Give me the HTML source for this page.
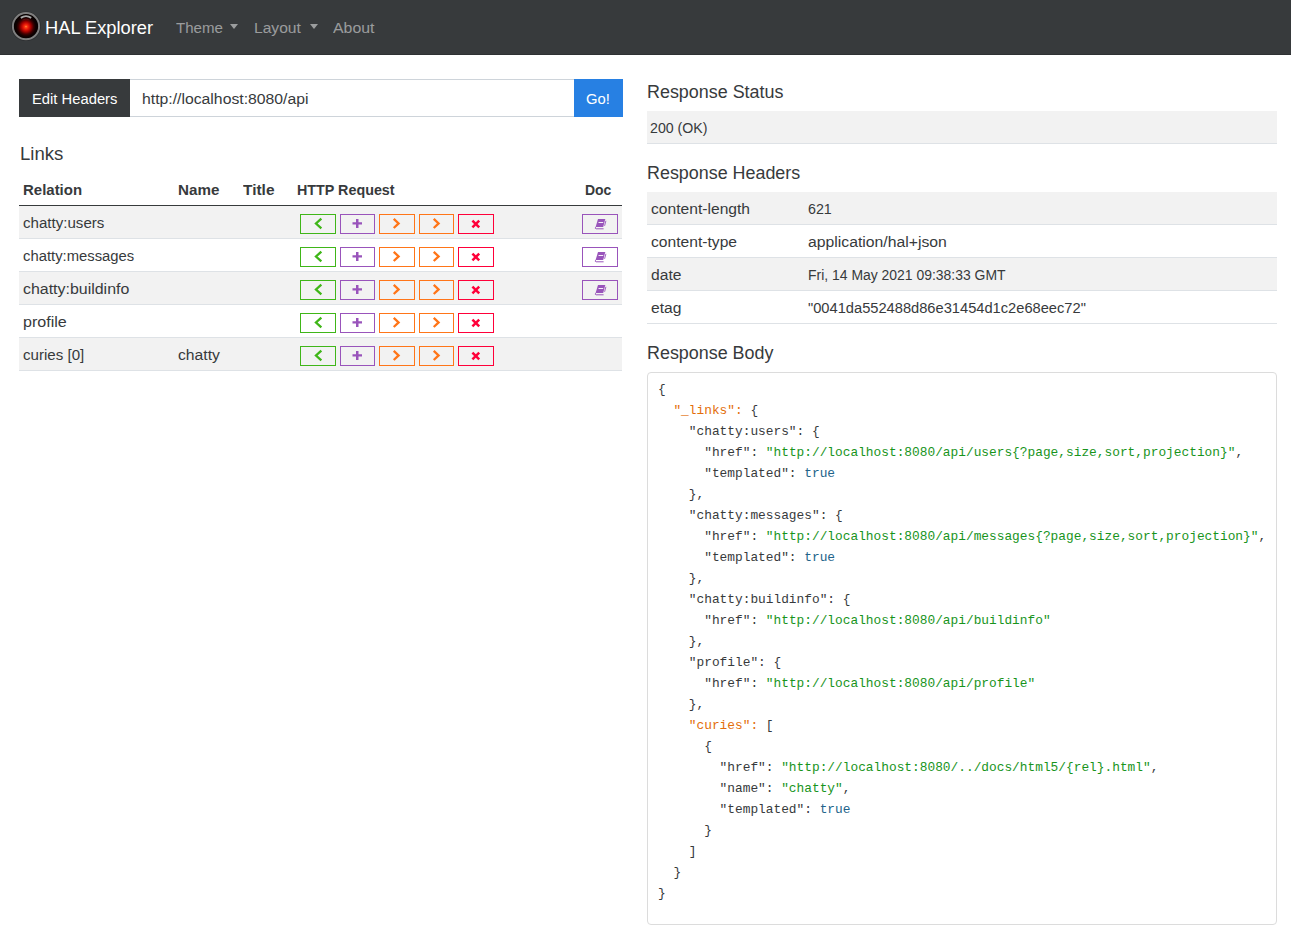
<!DOCTYPE html>
<html>
<head>
<meta charset="utf-8">
<style>
*{box-sizing:border-box;margin:0;padding:0}
html,body{width:1291px;height:942px;overflow:hidden;background:#fff}
body{font-family:"Liberation Sans",sans-serif;color:#373a3c;position:relative}
.t{position:absolute;white-space:pre;line-height:1;transform-origin:0 0;z-index:5}
.bm{display:inline-block;width:0;height:0;vertical-align:baseline}
#nav{position:absolute;left:0;top:0;width:1291px;height:55px;background:#373a3c;border-bottom:1px solid #2e3133}
#logo{position:absolute;left:10px;top:10px}
.caret{position:absolute;width:0;height:0;border-left:4.5px solid transparent;border-right:4.5px solid transparent;border-top:5px solid rgba(255,255,255,.5)}
.bx{position:absolute}
.row{position:absolute;left:0;height:33px;border-bottom:1px solid #dee2e6}
.row.s{background:#f2f2f2}
.ob{position:absolute;top:8px;height:20px;border:1px solid}
.g{border-color:#3fb618;color:#3fb618}
.p{border-color:#9954bb;color:#9954bb}
.o{border-color:#ff7518;color:#ff7518}
.r{border-color:#ff0039;color:#ff0039}
.ob svg{position:absolute;left:50%;top:50%;transform:translate(-50%,-50%)}
#pre{position:absolute;left:647px;top:372px;width:630px;height:553px;border:1px solid #dcdcdc;border-radius:4px}
#code{position:absolute;left:10px;top:6px;font-family:"Liberation Mono",monospace;font-size:12.83px;line-height:21px;white-space:pre;color:#373a3c}
.k{color:#e36e0a}
.st{color:#18941c}
.tr{color:#22638a}
</style>
</head>
<body>
<div id="nav">
  <svg id="logo" width="32" height="32" viewBox="0 0 32 32">
    <defs>
      <radialGradient id="eye" cx="16" cy="16.8" r="11.6" gradientUnits="userSpaceOnUse">
        <stop offset="0" stop-color="#ffc868"/>
        <stop offset="0.07" stop-color="#ff4a18"/>
        <stop offset="0.23" stop-color="#e81808"/>
        <stop offset="0.44" stop-color="#a00000"/>
        <stop offset="0.64" stop-color="#400000"/>
        <stop offset="0.82" stop-color="#120000"/>
        <stop offset="1" stop-color="#060000"/>
      </radialGradient>
    </defs>
    <circle cx="16" cy="16.2" r="14.8" fill="#262829" opacity="0.7"/>
    <circle cx="16" cy="16.2" r="13.1" fill="#0a0000" stroke="#7f7f7f" stroke-width="2"/>
    <circle cx="16" cy="16.2" r="11.6" fill="url(#eye)"/>
    <path d="M10.8 7.9 Q16 4.4 21.2 7.9" stroke="#a8a8a8" stroke-width="1.9" fill="none"/><path d="M12.5 10 Q16 8.2 19.5 10" stroke="#6a2020" stroke-width="1" fill="none" opacity="0.6"/>
  </svg>
  <span class="caret" style="left:230px;top:23.6px"></span>
  <span class="caret" style="left:309.5px;top:23.6px"></span>
</div>

<div class="bx" style="left:19px;top:79px;width:111px;height:38px;background:#373a3c"></div>
<div class="bx" style="left:130px;top:79px;width:444px;height:38px;border-top:1px solid #ced4da;border-bottom:1px solid #ced4da"></div>
<div class="bx" style="left:574px;top:79px;width:49px;height:38px;background:#2780e3"></div>

<div class="bx" style="left:19px;top:205px;width:603px;height:1px;background:#373a3c"></div>
<div id="rows" style="position:absolute;left:19px;top:206px;width:603px">
<div class="row s" style="top:0px;width:603px"><div class="ob g" style="left:281px;width:35.6px"><svg width="14" height="14" viewBox="0 0 14 14"><polyline points="10.35,1.7 5.0,6.5 10.35,11.3" fill="none" stroke="currentColor" stroke-width="2.3"/></svg></div><div class="ob p" style="left:320.6px;width:35.6px"><svg width="14" height="14" viewBox="0 0 14 14"><path d="M2.5 5.3H12V7.6H2.5Z M6.0 2.0H8.5V11.0H6.0Z" fill="currentColor"/></svg></div><div class="ob o" style="left:360.2px;width:35.6px"><svg width="14" height="14" viewBox="0 0 14 14"><polyline points="3.75,1.8 8.6,6.4 3.75,11.0" fill="none" stroke="currentColor" stroke-width="2.3"/></svg></div><div class="ob o" style="left:399.8px;width:35.6px"><svg width="14" height="14" viewBox="0 0 14 14"><polyline points="3.75,1.8 8.6,6.4 3.75,11.0" fill="none" stroke="currentColor" stroke-width="2.3"/></svg></div><div class="ob r" style="left:439.4px;width:35.6px"><svg width="14" height="14" viewBox="0 0 14 14"><path d="M3.4 3.6L10.2 10.4M10.2 3.6L3.4 10.4" stroke="currentColor" stroke-width="2.5"/></svg></div><div class="ob p" style="left:563px;width:35.6px"><svg width="14" height="14" viewBox="0 0 14 14"><path d="M5 2H12.3L10.2 10H2.6Z" fill="currentColor"/><path d="M2.5 10.2Q1.9 11.8 3.1 11.8H10.6" stroke="currentColor" stroke-width="1" fill="none"/><path d="M12.9 3.8L11.6 8.8" stroke="currentColor" stroke-width="0.9"/><path d="M5.6 5H10.3L10.05 6H5.35Z" fill="#fff" fill-opacity="0.9"/></svg></div></div>
<div class="row" style="top:33px;width:603px"><div class="ob g" style="left:281px;width:35.6px"><svg width="14" height="14" viewBox="0 0 14 14"><polyline points="10.35,1.7 5.0,6.5 10.35,11.3" fill="none" stroke="currentColor" stroke-width="2.3"/></svg></div><div class="ob p" style="left:320.6px;width:35.6px"><svg width="14" height="14" viewBox="0 0 14 14"><path d="M2.5 5.3H12V7.6H2.5Z M6.0 2.0H8.5V11.0H6.0Z" fill="currentColor"/></svg></div><div class="ob o" style="left:360.2px;width:35.6px"><svg width="14" height="14" viewBox="0 0 14 14"><polyline points="3.75,1.8 8.6,6.4 3.75,11.0" fill="none" stroke="currentColor" stroke-width="2.3"/></svg></div><div class="ob o" style="left:399.8px;width:35.6px"><svg width="14" height="14" viewBox="0 0 14 14"><polyline points="3.75,1.8 8.6,6.4 3.75,11.0" fill="none" stroke="currentColor" stroke-width="2.3"/></svg></div><div class="ob r" style="left:439.4px;width:35.6px"><svg width="14" height="14" viewBox="0 0 14 14"><path d="M3.4 3.6L10.2 10.4M10.2 3.6L3.4 10.4" stroke="currentColor" stroke-width="2.5"/></svg></div><div class="ob p" style="left:563px;width:35.6px"><svg width="14" height="14" viewBox="0 0 14 14"><path d="M5 2H12.3L10.2 10H2.6Z" fill="currentColor"/><path d="M2.5 10.2Q1.9 11.8 3.1 11.8H10.6" stroke="currentColor" stroke-width="1" fill="none"/><path d="M12.9 3.8L11.6 8.8" stroke="currentColor" stroke-width="0.9"/><path d="M5.6 5H10.3L10.05 6H5.35Z" fill="#fff" fill-opacity="0.9"/></svg></div></div>
<div class="row s" style="top:66px;width:603px"><div class="ob g" style="left:281px;width:35.6px"><svg width="14" height="14" viewBox="0 0 14 14"><polyline points="10.35,1.7 5.0,6.5 10.35,11.3" fill="none" stroke="currentColor" stroke-width="2.3"/></svg></div><div class="ob p" style="left:320.6px;width:35.6px"><svg width="14" height="14" viewBox="0 0 14 14"><path d="M2.5 5.3H12V7.6H2.5Z M6.0 2.0H8.5V11.0H6.0Z" fill="currentColor"/></svg></div><div class="ob o" style="left:360.2px;width:35.6px"><svg width="14" height="14" viewBox="0 0 14 14"><polyline points="3.75,1.8 8.6,6.4 3.75,11.0" fill="none" stroke="currentColor" stroke-width="2.3"/></svg></div><div class="ob o" style="left:399.8px;width:35.6px"><svg width="14" height="14" viewBox="0 0 14 14"><polyline points="3.75,1.8 8.6,6.4 3.75,11.0" fill="none" stroke="currentColor" stroke-width="2.3"/></svg></div><div class="ob r" style="left:439.4px;width:35.6px"><svg width="14" height="14" viewBox="0 0 14 14"><path d="M3.4 3.6L10.2 10.4M10.2 3.6L3.4 10.4" stroke="currentColor" stroke-width="2.5"/></svg></div><div class="ob p" style="left:563px;width:35.6px"><svg width="14" height="14" viewBox="0 0 14 14"><path d="M5 2H12.3L10.2 10H2.6Z" fill="currentColor"/><path d="M2.5 10.2Q1.9 11.8 3.1 11.8H10.6" stroke="currentColor" stroke-width="1" fill="none"/><path d="M12.9 3.8L11.6 8.8" stroke="currentColor" stroke-width="0.9"/><path d="M5.6 5H10.3L10.05 6H5.35Z" fill="#fff" fill-opacity="0.9"/></svg></div></div>
<div class="row" style="top:99px;width:603px"><div class="ob g" style="left:281px;width:35.6px"><svg width="14" height="14" viewBox="0 0 14 14"><polyline points="10.35,1.7 5.0,6.5 10.35,11.3" fill="none" stroke="currentColor" stroke-width="2.3"/></svg></div><div class="ob p" style="left:320.6px;width:35.6px"><svg width="14" height="14" viewBox="0 0 14 14"><path d="M2.5 5.3H12V7.6H2.5Z M6.0 2.0H8.5V11.0H6.0Z" fill="currentColor"/></svg></div><div class="ob o" style="left:360.2px;width:35.6px"><svg width="14" height="14" viewBox="0 0 14 14"><polyline points="3.75,1.8 8.6,6.4 3.75,11.0" fill="none" stroke="currentColor" stroke-width="2.3"/></svg></div><div class="ob o" style="left:399.8px;width:35.6px"><svg width="14" height="14" viewBox="0 0 14 14"><polyline points="3.75,1.8 8.6,6.4 3.75,11.0" fill="none" stroke="currentColor" stroke-width="2.3"/></svg></div><div class="ob r" style="left:439.4px;width:35.6px"><svg width="14" height="14" viewBox="0 0 14 14"><path d="M3.4 3.6L10.2 10.4M10.2 3.6L3.4 10.4" stroke="currentColor" stroke-width="2.5"/></svg></div></div>
<div class="row s" style="top:132px;width:603px"><div class="ob g" style="left:281px;width:35.6px"><svg width="14" height="14" viewBox="0 0 14 14"><polyline points="10.35,1.7 5.0,6.5 10.35,11.3" fill="none" stroke="currentColor" stroke-width="2.3"/></svg></div><div class="ob p" style="left:320.6px;width:35.6px"><svg width="14" height="14" viewBox="0 0 14 14"><path d="M2.5 5.3H12V7.6H2.5Z M6.0 2.0H8.5V11.0H6.0Z" fill="currentColor"/></svg></div><div class="ob o" style="left:360.2px;width:35.6px"><svg width="14" height="14" viewBox="0 0 14 14"><polyline points="3.75,1.8 8.6,6.4 3.75,11.0" fill="none" stroke="currentColor" stroke-width="2.3"/></svg></div><div class="ob o" style="left:399.8px;width:35.6px"><svg width="14" height="14" viewBox="0 0 14 14"><polyline points="3.75,1.8 8.6,6.4 3.75,11.0" fill="none" stroke="currentColor" stroke-width="2.3"/></svg></div><div class="ob r" style="left:439.4px;width:35.6px"><svg width="14" height="14" viewBox="0 0 14 14"><path d="M3.4 3.6L10.2 10.4M10.2 3.6L3.4 10.4" stroke="currentColor" stroke-width="2.5"/></svg></div></div>
</div>

<div class="bx" style="left:647px;top:111px;width:630px">
  <div class="row s" style="top:0;width:630px"></div>
</div>
<div class="bx" style="left:647px;top:192px;width:630px">
  <div class="row s" style="top:0;width:630px"></div>
  <div class="row" style="top:33px;width:630px"></div>
  <div class="row s" style="top:66px;width:630px"></div>
  <div class="row" style="top:99px;width:630px"></div>
</div>
<div id="pre">
<div id="code">{
  <span class="k">"_links":</span> {
    "chatty:users": {
      "href": <span class="st">"http://localhost:8080/api/users{?page,size,sort,projection}"</span>,
      "templated": <span class="tr">true</span>
    },
    "chatty:messages": {
      "href": <span class="st">"http://localhost:8080/api/messages{?page,size,sort,projection}"</span>,
      "templated": <span class="tr">true</span>
    },
    "chatty:buildinfo": {
      "href": <span class="st">"http://localhost:8080/api/buildinfo"</span>
    },
    "profile": {
      "href": <span class="st">"http://localhost:8080/api/profile"</span>
    },
    <span class="k">"curies":</span> [
      {
        "href": <span class="st">"http://localhost:8080/../docs/html5/{rel}.html"</span>,
        "name": <span class="st">"chatty"</span>,
        "templated": <span class="tr">true</span>
      }
    ]
  }
}</div>
</div>
<span id="brand" class="t" style="left:44.77px;top:19.00px;font-size:18.9px;font-weight:400;color:#fff;transform:scaleX(0.9678)">HAL Explorer</span>
<span id="theme" class="t" style="left:176.06px;top:20.00px;font-size:15.5px;font-weight:400;color:rgba(255,255,255,.5);transform:scaleX(0.9718)">Theme</span>
<span id="layout" class="t" style="left:254.32px;top:20.00px;font-size:15.5px;font-weight:400;color:rgba(255,255,255,.5);transform:scaleX(1.0067)">Layout</span>
<span id="about" class="t" style="left:333.44px;top:20.00px;font-size:15.5px;font-weight:400;color:rgba(255,255,255,.5);transform:scaleX(1.0235)">About</span>
<span id="edit" class="t" style="left:32.30px;top:91.00px;font-size:15.5px;font-weight:400;color:#fff;transform:scaleX(0.9535)">Edit Headers</span>
<span id="url" class="t" style="left:142.40px;top:91.00px;font-size:15.5px;font-weight:400;color:#373a3c;transform:scaleX(1.0172)">http://localhost:8080/api</span>
<span id="go" class="t" style="left:586.22px;top:91.00px;font-size:15.5px;font-weight:400;color:#fff;transform:scaleX(0.9541)">Go!</span>
<span id="links" class="t" style="left:19.77px;top:145.00px;font-size:18.9px;font-weight:400;color:#373a3c;transform:scaleX(0.9837)">Links</span>
<span id="th1" class="t" style="left:23.48px;top:182.00px;font-size:15.5px;font-weight:700;color:#373a3c;transform:scaleX(0.9661)">Relation</span>
<span id="th2" class="t" style="left:177.88px;top:182.00px;font-size:15.5px;font-weight:700;color:#373a3c;transform:scaleX(0.9792)">Name</span>
<span id="th3" class="t" style="left:243.39px;top:182.00px;font-size:15.5px;font-weight:700;color:#373a3c;transform:scaleX(0.9964)">Title</span>
<span id="th4" class="t" style="left:296.57px;top:182.00px;font-size:15.5px;font-weight:700;color:#373a3c;transform:scaleX(0.9236)">HTTP Request</span>
<span id="th5" class="t" style="left:585.17px;top:182.00px;font-size:15.5px;font-weight:700;color:#373a3c;transform:scaleX(0.9013)">Doc</span>
<span id="r1" class="t" style="left:22.61px;top:215.00px;font-size:15.5px;font-weight:400;color:#373a3c;transform:scaleX(0.9734)">chatty:users</span>
<span id="r2" class="t" style="left:22.62px;top:248.00px;font-size:15.5px;font-weight:400;color:#373a3c;transform:scaleX(0.9564)">chatty:messages</span>
<span id="r3" class="t" style="left:22.56px;top:281.00px;font-size:15.5px;font-weight:400;color:#373a3c;transform:scaleX(1.0281)">chatty:buildinfo</span>
<span id="r4" class="t" style="left:22.65px;top:314.00px;font-size:15.5px;font-weight:400;color:#373a3c;transform:scaleX(1.0376)">profile</span>
<span id="r5" class="t" style="left:23.01px;top:347.00px;font-size:15.5px;font-weight:400;color:#373a3c;transform:scaleX(0.9744)">curies [0]</span>
<span id="r5n" class="t" style="left:177.96px;top:347.00px;font-size:15.5px;font-weight:400;color:#373a3c;transform:scaleX(1.0133)">chatty</span>
<span id="rs" class="t" style="left:646.90px;top:83.00px;font-size:18.9px;font-weight:400;color:#373a3c;transform:scaleX(0.9485)">Response Status</span>
<span id="ok" class="t" style="left:650.10px;top:121.01px;font-size:14.2px;font-weight:400;color:#373a3c;transform:scaleX(0.9994)">200 (OK)</span>
<span id="rh" class="t" style="left:646.91px;top:164.00px;font-size:18.9px;font-weight:400;color:#373a3c;transform:scaleX(0.9474)">Response Headers</span>
<span id="h1k" class="t" style="left:650.56px;top:201.00px;font-size:15.5px;font-weight:400;color:#373a3c;transform:scaleX(1.0083)">content-length</span>
<span id="h1v" class="t" style="left:808.23px;top:201.00px;font-size:15.5px;font-weight:400;color:#373a3c;transform:scaleX(0.9198)">621</span>
<span id="h2k" class="t" style="left:650.62px;top:234.00px;font-size:15.5px;font-weight:400;color:#373a3c;transform:scaleX(1.0083)">content-type</span>
<span id="h2v" class="t" style="left:808.30px;top:234.00px;font-size:15.5px;font-weight:400;color:#373a3c;transform:scaleX(1.0165)">application/hal+json</span>
<span id="h3k" class="t" style="left:650.59px;top:267.00px;font-size:15.5px;font-weight:400;color:#373a3c;transform:scaleX(1.0083)">date</span>
<span id="h3v" class="t" style="left:808.49px;top:267.00px;font-size:15.5px;font-weight:400;color:#373a3c;transform:scaleX(0.8993)">Fri, 14 May 2021 09:38:33 GMT</span>
<span id="h4k" class="t" style="left:650.62px;top:300.00px;font-size:15.5px;font-weight:400;color:#373a3c;transform:scaleX(1.0083)">etag</span>
<span id="h4v" class="t" style="left:808.42px;top:300.00px;font-size:15.5px;font-weight:400;color:#373a3c;transform:scaleX(0.9460)">&quot;0041da552488d86e31454d1c2e68eec72&quot;</span>
<span id="rb" class="t" style="left:646.91px;top:344.00px;font-size:18.9px;font-weight:400;color:#373a3c;transform:scaleX(0.9479)">Response Body</span>
</body>
</html>
